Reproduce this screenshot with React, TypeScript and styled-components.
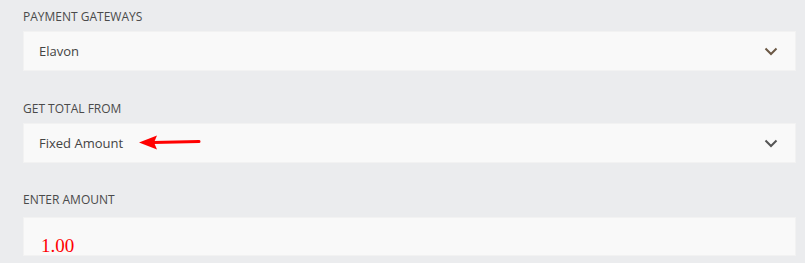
import React from "react";
import styled, { createGlobalStyle } from "styled-components";

const Global = createGlobalStyle`
  html, body { margin: 0; padding: 0; background: #ebecee; }
  body { font-family: "Open Sans", "Noto Sans", sans-serif; }
`;

const Page = styled.div`
  display: flex;
  flex-direction: column;
  padding: 9px 9px 0 23px;
  height: 263px;
  box-sizing: border-box;
  overflow: hidden;
`;

const Field = styled.div<{ $gap?: number }>`
  display: flex;
  flex-direction: column;
  margin-bottom: ${(p) => p.$gap ?? 0}px;
`;

const Label = styled.div<{ $space?: number }>`
  font-size: 12px;
  line-height: 16px;
  color: #4a4a4a;
  text-transform: uppercase;
  margin-bottom: ${(p) => p.$space ?? 6}px;
`;

const SelectBox = styled.div`
  position: relative;
  display: flex;
  align-items: center;
  justify-content: space-between;
  height: 40px;
  box-sizing: border-box;
  background: #f9f9f9;
  border: 1px solid #f2f2f2;
  padding: 0 17px 0 15px;
  font-size: 13px;
  color: #444;
`;

const InputBox = styled.div`
  display: flex;
  align-items: flex-end;
  height: 39px;
  box-sizing: border-box;
  background: #f9f9f9;
  border: 1px solid #f2f2f2;
  padding: 0 0 0 17px;
  font-family: "Liberation Serif", "Times New Roman", serif;
  font-size: 19px;
  line-height: 18px;
  color: #ff0000;
`;

const Chevron = ({ color }: { color: string }) => (
  <svg width="14" height="9" viewBox="0 0 14 9">
    <polyline points="1.5,1.5 7,7 12.5,1.5" fill="none" stroke={color} strokeWidth="2" />
  </svg>
);

const Annotation = styled.svg`
  position: absolute;
  left: 115px;
  top: 10px;
`;

export default function App() {
  return (
    <>
      <Global />
      <Page>
        <Field $gap={30}>
          <Label>Payment Gateways</Label>
          <SelectBox>
            <span>Elavon</span>
            <Chevron color="#6b5845" />
          </SelectBox>
        </Field>
        <Field $gap={29}>
          <Label>Get Total From</Label>
          <SelectBox>
            <span>Fixed Amount</span>
            <Annotation width="64" height="18" viewBox="0 0 64 18">
              <polygon points="0,8.5 18,1.5 15,8.5 18,15.5" fill="#ff0000" />
              <line x1="14" y1="8.5" x2="60" y2="7.5" stroke="#ff0000" strokeWidth="3" strokeLinecap="round" />
            </Annotation>
            <Chevron color="#555" />
          </SelectBox>
        </Field>
        <Field>
          <Label $space={9}>Enter Amount</Label>
          <InputBox>1.00</InputBox>
        </Field>
      </Page>
    </>
  );
}
